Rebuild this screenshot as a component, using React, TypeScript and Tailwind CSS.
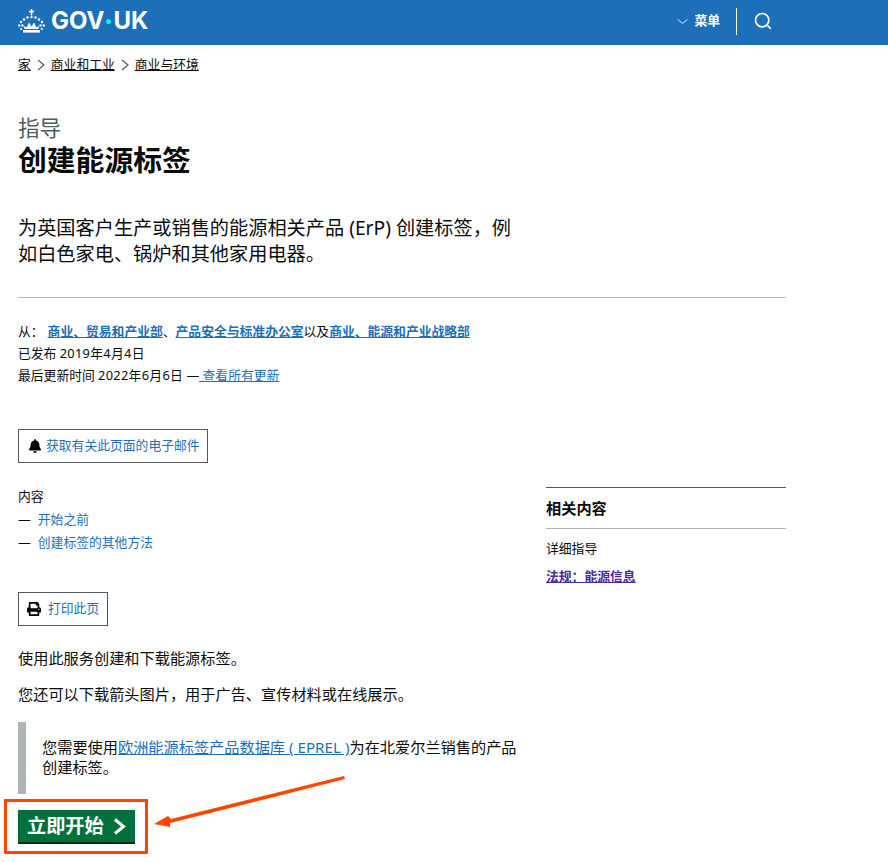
import { ChevronDown, Search } from "lucide-react";
import { FaBell, FaPrint } from "react-icons/fa";

const font = { fontFamily: '"Noto Sans", "Noto Sans CJK SC", sans-serif' };

function Crown() {
  return (
    <svg width="27" height="24" viewBox="0 0 27 24" fill="white" className="shrink-0">
      <rect x="12.7" y="0" width="1.6" height="6.5" />
      <rect x="11" y="1.8" width="5" height="1.5" />
      <circle cx="13.5" cy="8" r="1.2" />
      <circle cx="9.5" cy="8.5" r="1.2" />
      <circle cx="17.5" cy="8.5" r="1.2" />
      <circle cx="6" cy="10.5" r="1.2" />
      <circle cx="21" cy="10.5" r="1.2" />
      <circle cx="3" cy="13" r="1.2" />
      <circle cx="24" cy="13" r="1.2" />
      <circle cx="1.2" cy="16.5" r="1.2" />
      <circle cx="25.8" cy="16.5" r="1.2" />
      <circle cx="4.5" cy="16.5" r="1.2" />
      <circle cx="22.5" cy="16.5" r="1.2" />
      <circle cx="3.2" cy="20" r="1.1" />
      <circle cx="23.8" cy="20" r="1.1" />
      <path d="M6.5 20 L6 17 L8.5 18.5 L11 13.5 L13.5 17.5 L16 13.5 L18.5 18.5 L21 17 L20.5 20 Z" />
      <rect x="5" y="21" width="17" height="2.6" />
    </svg>
  );
}

function TopBar() {
  return (
    <header className="h-[45px] pb-[3px] bg-[#1d70b8] text-white flex items-center justify-between pl-[18px]">
      <div className="flex items-center gap-[6px]">
        <Crown />
        <span className="flex items-center text-[24px] font-bold leading-none" style={{ fontFamily: '"Inter", sans-serif' }}>
          GOV
          <span className="w-[5px] h-[5px] rounded-full bg-[#00ffe0] mx-[2px]" />
          UK
        </span>
      </div>
      <div className="flex items-center mr-[115px]">
        <ChevronDown size={15} strokeWidth={1.2} className="mr-[4px] scale-x-125" />
        <span className="text-[12.8px] font-bold">菜单</span>
        <div className="w-px h-[27px] bg-white mx-4" />
        <Search size={20} strokeWidth={2} />
      </div>
    </header>
  );
}

function Sep() {
  return (
    <svg width="8" height="12" viewBox="0 0 8 12" fill="none" stroke="#505a5f" strokeWidth="1.2" className="mx-[6px]">
      <path d="M1 1 L7 6 L1 11" />
    </svg>
  );
}

function Breadcrumbs() {
  return (
    <nav className="flex items-center h-[40px] text-[12.8px] text-[#0b0c0c]">
      <a className="underline">家</a>
      <Sep />
      <a className="underline">商业和工业</a>
      <Sep />
      <a className="underline">商业与环境</a>
    </nav>
  );
}

function BoxButton({ icon, label, className }: { icon: React.ReactNode; label: string; className: string }) {
  return (
    <div className={`flex items-center h-[34px] border border-[#505a5f] text-[12.8px] text-[#1d70b8] ${className}`}>
      {icon}
      {label}
    </div>
  );
}

export default function App() {
  return (
    <div className="min-h-[862px] bg-white text-[#0b0c0c] overflow-hidden relative" style={font}>
      <TopBar />
      <div className="w-[768px] ml-[18px]">
        <Breadcrumbs />
        <div className="pt-[30px]">
          <div className="text-[21.6px] leading-[26px] text-[#505a5f]">指导</div>
          <h1 className="mt-px text-[28.8px] leading-[36px] font-bold">创建能源标签</h1>
        </div>
        <p className="mt-[37px] w-[500px] text-[19.2px] leading-[26px]">
          为英国客户生产或销售的能源相关产品 (ErP) 创建标签，例如白色家电、锅炉和其他家用电器。
        </p>
        <hr className="mt-[30px] border-[#b1b4b6]" />
        <div className="mt-[22px] text-[12.8px] leading-[22px]">
          <div>
            从：
            <a className="ml-[4px] font-bold text-[#1d70b8] underline">商业、贸易和产业部</a>、
            <a className="font-bold text-[#1d70b8] underline">产品安全与标准办公室</a>以及
            <a className="font-bold text-[#1d70b8] underline">商业、能源和产业战略部</a>
          </div>
          <div>已发布 <span className="tracking-[0.3px]">2019年4月4日</span></div>
          <div>
            最后更新时间 <span className="tracking-[0.3px]">2022年6月6日</span> —<a className="text-[#1d70b8] underline"> 查看所有更新</a>
          </div>
        </div>
        <BoxButton
          className="mt-[43px] w-[190px] pl-[9px] gap-[4px]"
          icon={<FaBell size={14} className="text-black" />}
          label="获取有关此页面的电子邮件"
        />
        <div className="flex mt-[24px]">
          <div className="w-[528px] -mt-[2px]">
            <div className="text-[12.8px] leading-[23px]">
              <div>内容</div>
              <div className="flex gap-[7px]">
                <span>—</span>
                <a className="text-[#1d70b8]">开始之前</a>
              </div>
              <div className="flex gap-[7px]">
                <span>—</span>
                <a className="text-[#1d70b8]">创建标签的其他方法</a>
              </div>
            </div>
            <BoxButton
              className="mt-[38px] w-[90px] pl-[8px] gap-[7px]"
              icon={<FaPrint size={14} className="text-black" />}
              label="打印此页"
            />
            <p className="mt-[22px] text-[15.2px] leading-[20px]">使用此服务创建和下载能源标签。</p>
            <p className="mt-[16px] text-[15.2px] leading-[20px]">您还可以下载箭头图片，用于广告、宣传材料或在线展示。</p>
            <div className="mt-[18px] w-[510px] h-[72px] border-l-[8px] border-[#b1b4b6] pl-[16px] pt-[15px] text-[15.2px] leading-[20px]">
              您需要使用<a className="text-[#1d70b8] underline">欧洲能源标签产品数据库 ( EPREL )</a>为在北爱尔兰销售的产品创建标签。
            </div>
            <div className="mt-[16px] flex items-center h-[34px] w-[117px] pl-[9px] bg-[#00703c] border-b-2 border-[#002d18] text-white text-[19.2px] font-bold">
              立即开始
              <svg width="14" height="17" viewBox="0 0 14 17" className="ml-[9px]" fill="none" stroke="white" strokeWidth="3">
                <path d="M2 1.5 L10.5 8.5 L2 15.5" />
              </svg>
            </div>
          </div>
          <aside className="w-[240px] border-t border-[#505a5f]">
            <div className="h-[41px] pt-px flex items-center text-[15.2px] font-bold border-b border-[#b1b4b6]">相关内容</div>
            <div className="mt-[10px] text-[12.8px] leading-[18px]">详细指导</div>
            <a className="block mt-[10px] text-[12.8px] leading-[18px] font-bold text-[#4c2c92] underline">法规：能源信息</a>
          </aside>
        </div>
      </div>
      {/* annotation over the page */}
      <div className="absolute left-[4px] top-[799px] w-[144px] h-[55px] border-[3px] border-[#ff4500] rounded-[1px]" />
      <svg className="absolute left-[150px] top-[772px]" width="200" height="60" viewBox="0 0 200 60" fill="#ff4500">
        <path d="M194 4 L21 47 L18 44 L4 52 L20 55 L20 51 L195 7 Z" />
      </svg>
    </div>
  );
}
